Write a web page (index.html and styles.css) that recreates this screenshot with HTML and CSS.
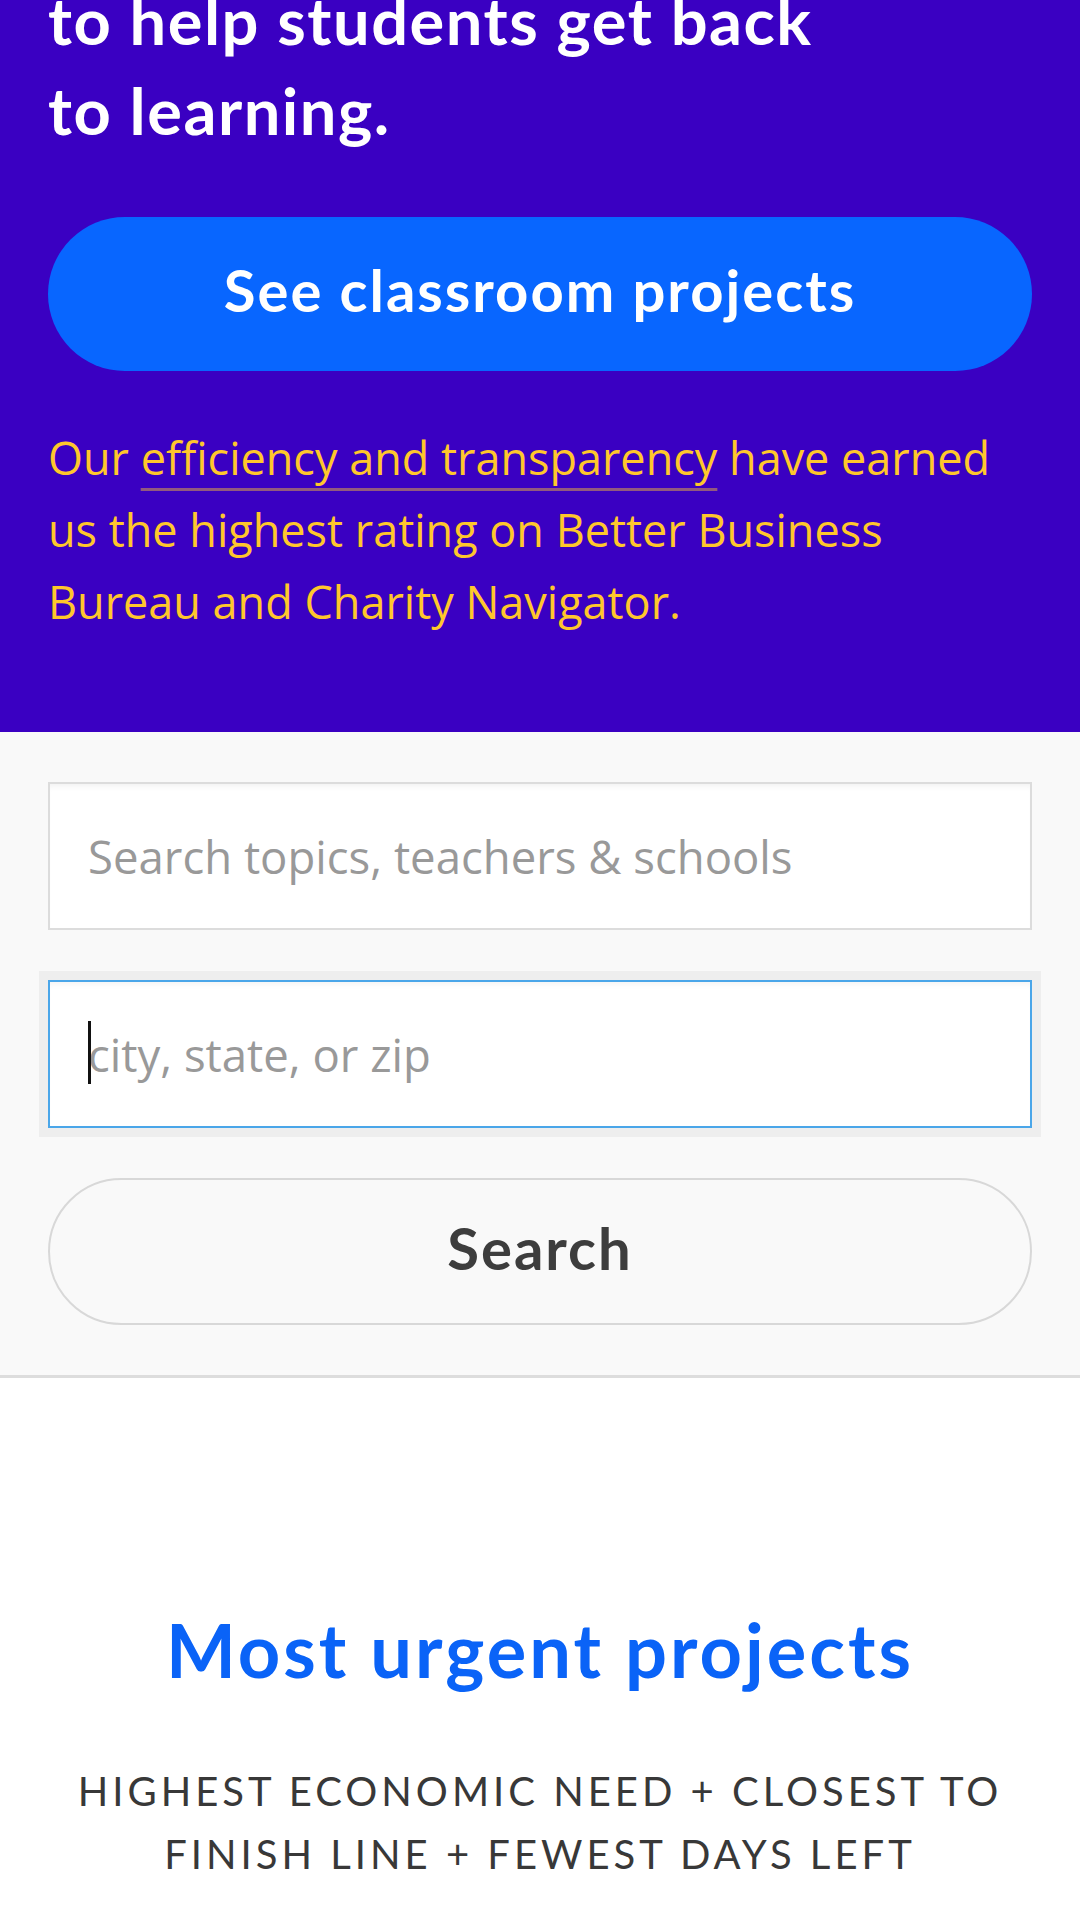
FILE: index.html
```html
<!DOCTYPE html>
<html lang="en">
<head>
    <meta charset="UTF-8">
    <meta name="viewport" content="width=device-width, initial-scale=1.0">
    <title>DonorsChoose</title>
    <link rel="stylesheet" href="styles.css">
</head>
<body>
    <section class="hero">
        <h1 class="hero-title">to help students get back<br>to learning.</h1>
        <a class="btn-primary" href="#">See classroom projects</a>
        <p class="hero-text">Our <a href="#">efficiency and transparency</a> have earned us the highest rating on Better Business Bureau and Charity Navigator.</p>
    </section>

    <section class="search">
        <div class="field">
            <input type="text" placeholder="Search topics, teachers &amp; schools">
        </div>
        <div class="field focused">
            <input type="text" placeholder="city, state, or zip">
            <span class="caret"></span>
        </div>
        <button class="btn-search">Search</button>
    </section>

    <section class="urgent">
        <h2>Most urgent projects</h2>
        <p class="urgent-sub">Highest economic need + closest to finish line + fewest days left</p>
    </section>
</body>
</html>
```

FILE: styles.css
```css
body {
    margin: 0;
    background: #fff;
    font-family: "Open Sans", "Noto Sans", sans-serif;
    overflow: hidden;
}
.hero {
    background: #3a00c2;
    padding: 0 48px 94px;
}
.hero-title {
    margin: -25px 0 0;
    font-family: Lato, sans-serif;
    font-weight: 700;
    font-size: 65px;
    line-height: 90px;
    letter-spacing: 1.5px;
    color: #fff;
}
.btn-primary {
    display: flex;
    align-items: center;
    justify-content: center;
    margin-top: 62px;
    height: 154px;
    padding-bottom: 10px;
    box-sizing: border-box;
    border-radius: 77px;
    background: #0866ff;
    color: #fff;
    font-family: Lato, sans-serif;
    font-weight: 700;
    font-size: 58px;
    letter-spacing: 2px;
    text-decoration: none;
}
.hero-text {
    margin: 51px 0 0;
    font-size: 45px;
    line-height: 72px;
    color: #ffc72c;
}
.hero-text a {
    color: inherit;
    text-decoration: underline;
    text-decoration-color: rgba(255, 199, 44, 0.45);
    text-decoration-thickness: 3px;
    text-underline-offset: 13px;
}
.search {
    background: #f9f9f9;
    padding: 50px 48px;
    border-bottom: 3px solid #ddd;
    display: flex;
    flex-direction: column;
    gap: 50px;
}
.field {
    position: relative;
}
.field input {
    display: block;
    box-sizing: border-box;
    width: 100%;
    height: 148px;
    margin: 0;
    padding: 0 38px;
    border: 2px solid #dcdcdc;
    border-radius: 0;
    background: #fff;
    box-shadow: inset 0 6px 6px -4px rgba(0, 0, 0, 0.06);
    font-family: "Open Sans", "Noto Sans", sans-serif;
    font-size: 45.5px;
    color: #333;
    outline: none;
}
.field input::placeholder {
    color: #999;
}
.field.focused input {
    border-color: #4aa6e9;
    box-shadow: 0 0 0 9px #eeeeee, inset 0 6px 6px -4px rgba(0, 0, 0, 0.05);
}
.caret {
    position: absolute;
    left: 40px;
    top: 41px;
    width: 3px;
    height: 63px;
    background: #111;
}
.btn-search {
    height: 147px;
    padding-bottom: 10px;
    border: 2px solid #d8d8d8;
    border-radius: 74px;
    background: transparent;
    color: #3d3d3d;
    font-family: Lato, sans-serif;
    font-weight: 700;
    font-size: 58px;
    letter-spacing: 2px;
    cursor: pointer;
}
.urgent {
    text-align: center;
    padding: 228px 48px 0;
}
.urgent h2 {
    margin: 0;
    font-family: Lato, sans-serif;
    font-weight: 700;
    font-size: 74px;
    line-height: 1.2;
    letter-spacing: 3px;
    color: #0a63f7;
}
.urgent-sub {
    margin: 65px 0 0;
    font-family: Lato, sans-serif;
    font-size: 40px;
    line-height: 63px;
    letter-spacing: 4px;
    text-transform: uppercase;
    color: #383838;
}
```
